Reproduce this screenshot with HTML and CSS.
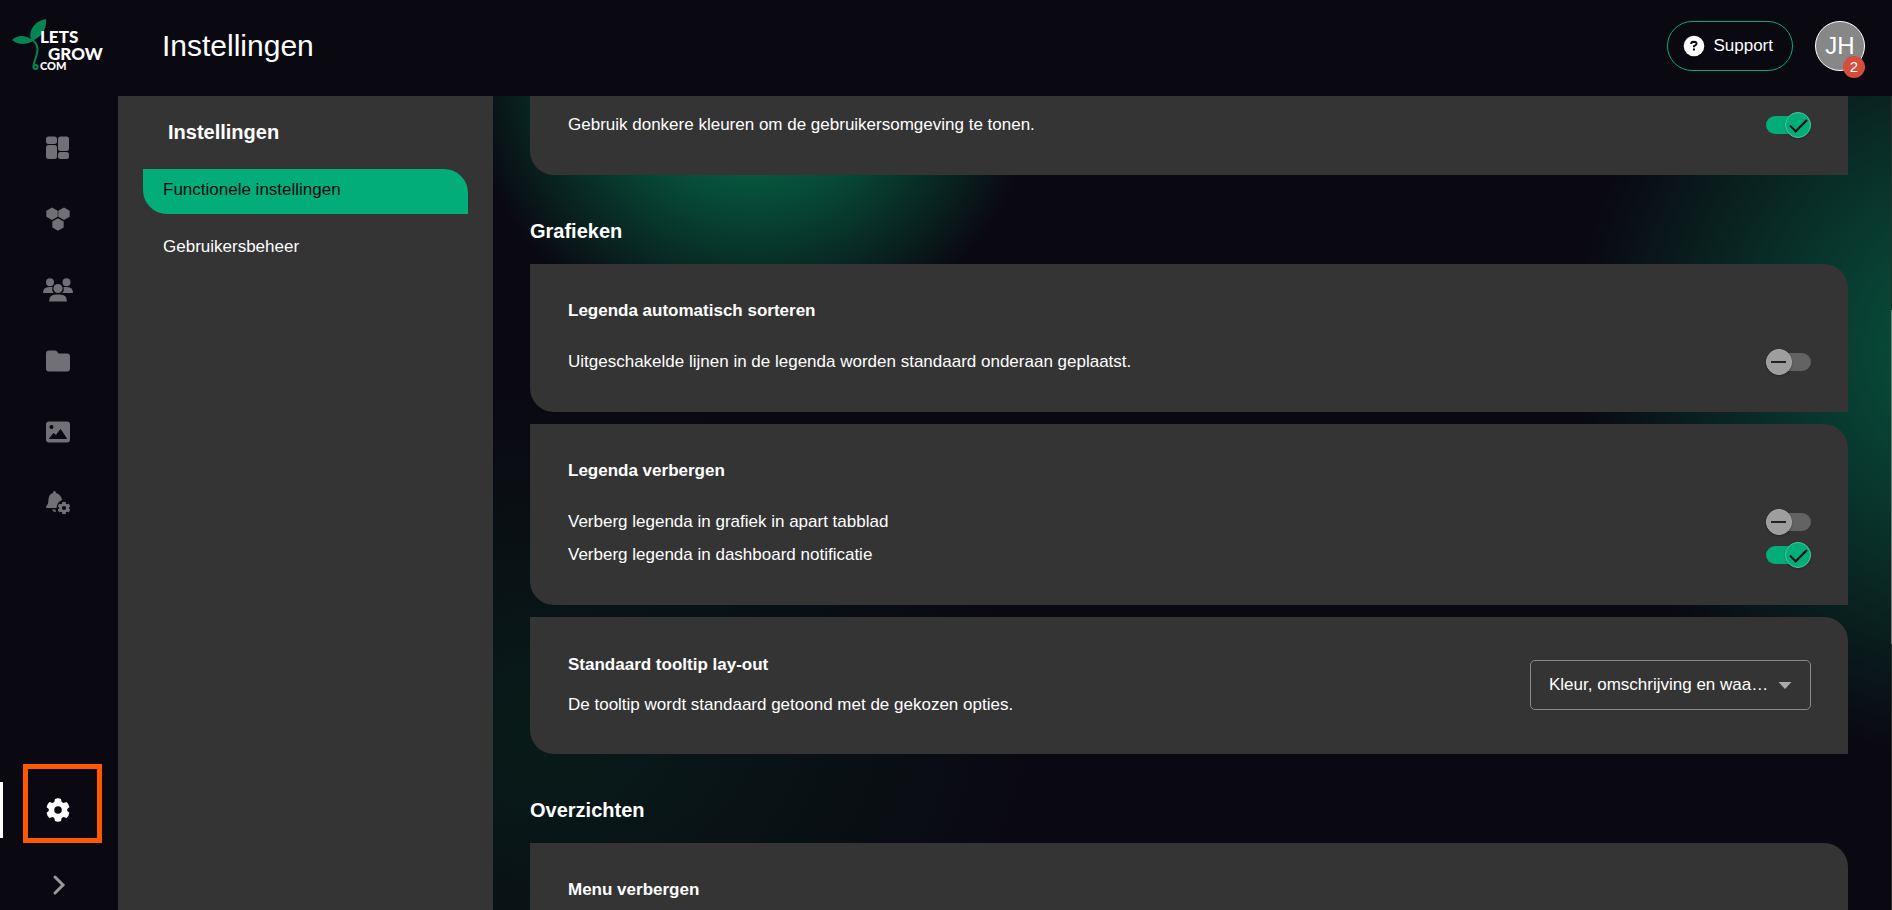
FILE: index.html
```html
<!DOCTYPE html>
<html lang="nl">
<head>
<meta charset="utf-8">
<title>Instellingen</title>
<link rel="stylesheet" href="styles.css">
</head>
<body>
<div class="app">
  <header class="topbar">
    <a class="logo" href="#" aria-label="LetsGrow.com">
      <svg width="96" height="56" viewBox="0 0 96 56">
        <g fill="#068453">
          <path d="M19 22C16 12 23 3 34 1C35 10 31 18 20 23Z"/>
          <path d="M0 22C6 16 15 17 21 23C14 27 6 27 0 22Z"/>
        </g>
        <path d="M19 21C29 27 25 36 23 42C22 45 21 47 22 49" fill="none" stroke="#068453" stroke-width="2"/>
        <circle cx="23.500" cy="49" r="2" fill="none" stroke="#068453" stroke-width="2"/>
        <g fill="#fff" class="logo-text">
          <text x="28" y="25" font-size="17">LETS</text>
          <text x="36" y="42" font-size="17">GROW</text>
          <text x="28" y="52" font-size="11">COM</text>
        </g>
      </svg>
    </a>
    <h1 class="page-title">Instellingen</h1>
    <button class="support" type="button">
      <svg width="22" height="22" viewBox="0 0 22 22"><circle cx="11" cy="11" r="10.300" fill="#fff"/><path d="M8.300 9V8.200Q8.500 6.800 11 6.800Q13.600 6.900 13.500 8.900Q13.400 10 11 11.200V12.300" fill="none" stroke="#0a0911" stroke-width="2"/><rect x="10" y="13.500" width="2" height="2" fill="#0a0911"/></svg>
      <span>Support</span>
    </button>
    <button class="avatar" type="button">JH<span class="badge">2</span></button>
  </header>

  <nav class="rail" aria-label="Hoofdmenu">
    <a href="#" class="rail-item" aria-label="Dashboard"><svg width="24" height="24" viewBox="0 0 24 24"><rect x="0" y="0.500" width="11" height="7.500" rx="2.500"/><rect x="12" y="0.500" width="11" height="14.500" rx="2.500"/><rect x="0" y="9" width="11" height="14" rx="2.500"/><rect x="12" y="16" width="11" height="7" rx="2.500"/></svg></a>
    <a href="#" class="rail-item" aria-label="Modules"><svg width="24" height="24" viewBox="0 0 24 24"><path d="M6 0.500L11.700 3.700V9.700L6 13L0.300 9.700V3.700ZM18 0.500L23.700 3.700V9.700L18 13L12.300 9.700V3.700ZM12 11.200L17.700 14.400V20.400L12 23.700L6.300 20.400V14.400Z"/></svg></a>
    <a href="#" class="rail-item" aria-label="Gebruikers"><svg width="30" height="24" viewBox="0 0 30 24"><circle cx="7" cy="4.300" r="4"/><circle cx="23.500" cy="4.300" r="4"/><circle cx="15" cy="10.500" r="4.600"/><path d="M0 15Q0 9 6 9H9.500Q8.400 13 11 15ZM30 15Q30 9 24 9H20.500Q21.600 13 19 15Z"/><path d="M6 23.500Q6 16.500 13 16.500H17Q24 16.500 24 23.500Z"/></svg></a>
    <a href="#" class="rail-item" aria-label="Bestanden"><svg width="24" height="24" viewBox="0 0 24 24"><path d="M3 1.500H9Q10.500 1.500 11.500 3L12.500 4.500H21Q24 4.500 24 7.500V19.500Q24 22.500 21 22.500H3Q0 22.500 0 19.500V4.500Q0 1.500 3 1.500Z"/></svg></a>
    <a href="#" class="rail-item" aria-label="Afbeeldingen"><svg width="24" height="24" viewBox="0 0 24 24"><rect y="1.500" width="24" height="21" rx="3"/><circle cx="5.500" cy="7" r="2" fill="#0a0911"/><path d="M3.500 18.500L7.500 13.500L10 15.500L14.500 9.500L20.500 18.500Z" fill="#0a0911" stroke="#0a0911" stroke-linejoin="round"/></svg></a>
    <a href="#" class="rail-item" aria-label="Meldingen"><svg width="26" height="26" viewBox="0 0 26 26"><path d="M9.500 1Q11 1 11 3Q16 4.500 17 10Q12 12 11.500 18H1.500Q0.500 17 1.500 16Q3.500 14 3.500 9Q4 4 8 3Q8 1 9.500 1ZM7 19.500H10.500Q10.500 20.500 11 22Q8 22 7 19.500Z"/><use href="#gear" x="12.500" y="11.500" width="13" height="13"/></svg></a>
    <a href="#" class="rail-item rail-settings" aria-label="Instellingen" aria-current="page"><svg width="24" height="24" viewBox="0 0 24 24"><symbol id="gear" viewBox="0 0 24 24"><path fill-rule="evenodd" d="M9 1Q12-.5 15 1L15.700 4L17.500 5L20.500 4Q23 6 23.400 9.200L21.200 11V13L23.400 14.800Q23 18 20.500 20L17.500 19L15.700 20L15 23Q12 24.500 9 23L8.300 20L6.500 19L3.500 20Q1 18 .6 14.800L2.800 13V11L.6 9.200Q1 6 3.500 4L6.500 5L8.300 4ZM12 8.200A3.800 3.800 0 1 0 12 15.800A3.800 3.800 0 1 0 12 8.200Z"/></symbol><use href="#gear"/></svg></a>
    <button class="rail-toggle" type="button" aria-label="Menu uitklappen"><svg width="16" height="22" viewBox="0 0 16 22"><path d="M4 3L12 11L4 19" fill="none" stroke="#999" stroke-width="3" stroke-linecap="round"/></svg></button>
  </nav>

  <aside class="panel">
    <h2 class="panel-title">Instellingen</h2>
    <nav class="panel-nav">
      <a class="panel-link active" href="#">Functionele instellingen</a>
      <a class="panel-link" href="#">Gebruikersbeheer</a>
    </nav>
  </aside>

  <main class="content">
    <section class="card card-cut">
      <div class="row"><label for="dark">Gebruik donkere kleuren om de gebruikersomgeving te tonen.</label><input id="dark" class="switch" type="checkbox" checked></div>
    </section>

    <h2 class="section-title">Grafieken</h2>
    <div class="stack">
      <section class="card">
        <h3 class="card-title">Legenda automatisch sorteren</h3>
        <div class="row"><label for="sort">Uitgeschakelde lijnen in de legenda worden standaard onderaan geplaatst.</label><input id="sort" class="switch" type="checkbox"></div>
      </section>
      <section class="card">
        <h3 class="card-title">Legenda verbergen</h3>
        <div class="row"><label for="tab">Verberg legenda in grafiek in apart tabblad</label><input id="tab" class="switch" type="checkbox"></div>
        <div class="row"><label for="dash">Verberg legenda in dashboard notificatie</label><input id="dash" class="switch" type="checkbox" checked></div>
      </section>
      <section class="card card-select">
        <div>
          <h3 class="card-title">Standaard tooltip lay-out</h3>
          <label for="tooltip">De tooltip wordt standaard getoond met de gekozen opties.</label>
        </div>
        <div class="select">
          <select id="tooltip"><option>Kleur, omschrijving en waarde</option></select>
          <svg class="arrow" width="14" height="7" viewBox="0 0 14 7"><path d="M0.500 0H13.500L7 7Z" fill="#aaa"/></svg>
        </div>
      </section>
    </div>

    <h2 class="section-title">Overzichten</h2>
    <section class="card">
      <h3 class="card-title">Menu verbergen</h3>
    </section>
    <div class="scroll-track"><div class="scroll-thumb"></div></div>
  </main>
</div>
</body>
</html>
```
FILE: styles.css
```css
*, *::before, *::after { box-sizing: border-box; }
body {
  margin: 0;
  background: #0a0911;
  color: #fff;
  font: 17px/24px "Liberation Sans", Arial, sans-serif;
}
h1, h2, h3 { margin: 0; }
a { color: inherit; text-decoration: none; }
button, select { font: inherit; color: inherit; }
.app {
  display: grid;
  grid-template: 96px 1fr / 118px 375px 1fr;
  height: 100vh;
  overflow: hidden;
}

.topbar {
  grid-column: 1 / -1;
  display: flex;
  align-items: center;
  padding: 0 27px 4px 12px;
}
.logo { width: 150px; height: 56px; }
.logo-text { font-family: Lato, sans-serif; font-weight: 900; }
.page-title { flex: 1; font-size: 30px; font-weight: 400; line-height: 36px; }
.support {
  display: flex;
  align-items: center;
  gap: 8px;
  height: 50px;
  padding: 0 19px 0 15px;
  border: 1px solid #03ad79;
  border-radius: 25px;
  background: none;
}
.avatar {
  position: relative;
  width: 50px;
  height: 50px;
  margin-left: 22px;
  padding: 0;
  border: 1px solid #fff;
  border-radius: 50%;
  background: #878787;
  font-size: 24px;
}
.badge {
  position: absolute;
  right: -1px;
  bottom: -8px;
  width: 22px;
  border-radius: 11px;
  background: #d44d3d;
  font-size: 15px;
  line-height: 22px;
}

.rail {
  display: flex;
  flex-direction: column;
  padding-top: 16px;
}
.rail-item {
  display: flex;
  align-items: center;
  justify-content: center;
  height: 71px;
  padding-right: 2px;
  fill: #717077;
}
.rail-settings {
  width: 79px;
  height: 79px;
  margin: auto 0 24px 23px;
  padding: 13px 9px 0 0;
  border: 5px solid #ff5800;
  fill: #fff;
}
.rail-settings::before {
  content: "";
  position: absolute;
  left: 0;
  width: 3px;
  height: 56px;
  background: #fff;
}
.rail-toggle {
  display: flex;
  justify-content: center;
  height: 43px;
  padding: 7px 0 0;
  border: 0;
  background: none;
}

.panel { padding: 24px 25px; background: #343434; }
.panel-title { padding-left: 25px; font-size: 20px; line-height: 24px; }
.panel-nav { display: grid; gap: 12px; margin-top: 25px; }
.panel-link {
  height: 45px;
  padding: 9px 20px;
  border-radius: 0 24px;
}
.active { background: #03ad79; color: #0a0911; }

.content {
  position: relative;
  min-height: 0;
  overflow: hidden;
  padding: 0 44px 0 37px;
  background:
    radial-gradient(circle 290px at 260px -36px, #04885b, #04181a00),
    radial-gradient(circle 410px at calc(100% + 93px) 254px, #075a42, #06181a00),
    radial-gradient(480px 340px at 57px 640px, #081b19, #08101400);
}
.card {
  padding: 35px 37px 34px 38px;
  border-radius: 0 24px;
  background: #343434;
}
.card-cut { padding-top: 12px; border-top-right-radius: 0; }
.stack { display: grid; gap: 12px; }
.section-title { padding: 44px 0 21px; font-size: 20px; line-height: 24px; }
.card-title { margin-bottom: 22px; font-size: 17px; line-height: 24px; }
.row {
  display: flex;
  align-items: center;
  justify-content: space-between;
  height: 33px;
}
.switch {
  appearance: none;
  position: relative;
  width: 45px;
  height: 18px;
  margin: 0;
  border-radius: 9px;
  background: #636363;
}
.switch::before {
  content: "";
  position: absolute;
  top: -4px;
  left: 0;
  width: 26px;
  height: 26px;
  border: 1px solid #aaa;
  border-radius: 50%;
  background: #9e9e9e;
  box-shadow: 0 1px 2px #0004;
}
.switch::after {
  content: "";
  position: absolute;
  top: 8px;
  left: 5px;
  width: 15px;
  height: 2px;
  background: #222;
}
.switch:checked { background: #03ad79; }
.switch:checked::before { left: 19px; border-color: #4fc6a1; background: #03ad79; }
.switch:checked::after {
  top: 3px;
  left: 24px;
  width: 17px;
  height: 9px;
  border: solid #0a0911;
  border-width: 0 0 2px 2px;
  background: none;
  transform: rotate(-45deg);
}

.card-select {
  display: flex;
  align-items: center;
  justify-content: space-between;
  padding-top: 36px;
  padding-bottom: 37px;
}
.card-select .card-title { margin-bottom: 16px; }
.card-select label { display: block; }
.select { position: relative; width: 281px; }
.select select {
  display: block;
  appearance: none;
  width: 100%;
  height: 50px;
  padding: 0 40px 0 18px;
  border: 1px solid #8a8a8a;
  border-radius: 5px;
  background: none;
  text-overflow: ellipsis;
}
.arrow { position: absolute; right: 19px; top: 22px; pointer-events: none; }

.scroll-track { position: absolute; right: 0; top: 0; bottom: 0; width: 1px; background: #2c2c2c; }
.scroll-thumb { height: 41%; margin-top: 214px; background: #7a7a7a; }
```
